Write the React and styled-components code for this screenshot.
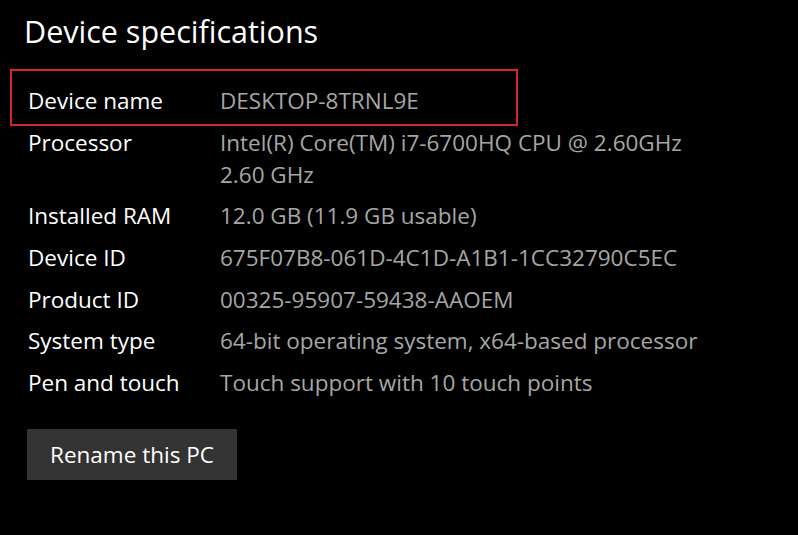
import React from 'react';
import styled, { createGlobalStyle } from 'styled-components';

const GlobalStyle = createGlobalStyle`
  html, body {
    margin: 0;
    padding: 0;
    background: #000000;
  }
  body {
    font-family: "Open Sans", "Noto Sans", sans-serif;
    -webkit-font-smoothing: antialiased;
  }
`;

const Page = styled.div`
  width: 798px;
  height: 535px;
  background: #000000;
  padding: 11px 0 0 24px;
  box-sizing: border-box;
  overflow: hidden;
`;

const Title = styled.h1`
  margin: 0;
  font-size: 30.5px;
  font-weight: 400;
  line-height: 40px;
  color: #ffffff;
`;

const SpecList = styled.dl`
  margin: 34px 0 0 4px;
  display: flex;
  flex-direction: column;
  gap: 9.7px;
`;

const SpecRow = styled.div`
  position: relative;
  display: grid;
  grid-template-columns: 192px 490px;
  font-size: 22.5px;
  line-height: 32px;

  ${props => props.highlighted && `
    &::after {
      content: '';
      position: absolute;
      left: -18px;
      top: -16px;
      width: 508px;
      height: 57px;
      border: 2.5px solid #d9232c;
      box-sizing: border-box;
      pointer-events: none;
    }
  `}
`;

const Label = styled.dt`
  margin: 0;
  color: #ffffff;
`;

const Value = styled.dd`
  margin: 0;
  color: #a6a6a6;
`;

const RenameButton = styled.button`
  margin: 30px 0 0 3px;
  width: 210px;
  height: 51px;
  border: none;
  background: #333333;
  color: #ffffff;
  font-family: inherit;
  font-size: 22.5px;
  padding: 0;
  cursor: pointer;
`;

const specs = [
  { label: 'Device name', value: 'DESKTOP-8TRNL9E', highlighted: true },
  { label: 'Processor', value: 'Intel(R) Core(TM) i7-6700HQ CPU @ 2.60GHz 2.60 GHz' },
  { label: 'Installed RAM', value: '12.0 GB (11.9 GB usable)' },
  { label: 'Device ID', value: '675F07B8-061D-4C1D-A1B1-1CC32790C5EC' },
  { label: 'Product ID', value: '00325-95907-59438-AAOEM' },
  { label: 'System type', value: '64-bit operating system, x64-based processor' },
  { label: 'Pen and touch', value: 'Touch support with 10 touch points' },
];

export default function App() {
  return (
    <>
      <GlobalStyle />
      <Page>
        <Title>Device specifications</Title>
        <SpecList>
          {specs.map(spec => (
            <SpecRow key={spec.label} highlighted={spec.highlighted}>
              <Label>{spec.label}</Label>
              <Value>{spec.value}</Value>
            </SpecRow>
          ))}
        </SpecList>
        <RenameButton>Rename this PC</RenameButton>
      </Page>
    </>
  );
}
